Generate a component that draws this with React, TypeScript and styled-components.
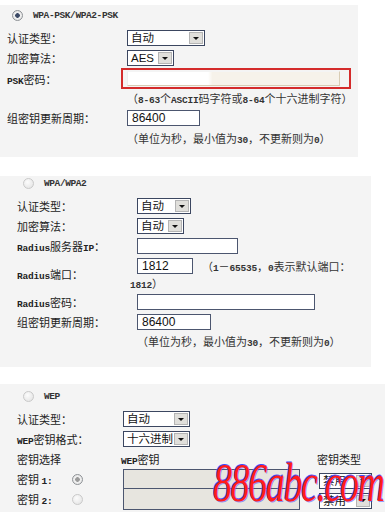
import styled, { createGlobalStyle } from 'styled-components';

const GlobalStyle = createGlobalStyle`
  html, body {
    margin: 0;
    padding: 0;
    background: #fff;
  }
  body {
    width: 385px;
    height: 512px;
    overflow: hidden;
    font-family: "Noto Sans CJK SC", sans-serif;
    color: #222;
  }
`;

const CJK = `"Noto Sans CJK SC", sans-serif`;

function L({ children }: { children: string }) {
  return <Latin>{children}</Latin>;
}

function Select({ width, value }: { width: number; value: string }) {
  return (
    <SelectBox $w={width}>
      <SelectText>{value}</SelectText>
      <SelectArrow />
    </SelectBox>
  );
}

export default function App() {
  return (
    <Page>
      <GlobalStyle />

      <Panel $width={358} $pad="3px 0 9px 7px">
        <ModeRow $indent={5}>
          <Radio $checked />
          <ModeLabel>WPA-PSK/WPA2-PSK</ModeLabel>
        </ModeRow>
        <FormRow $label={120}>
          <Label>认证类型：</Label>
          <Select width={78} value="自动" />
        </FormRow>
        <FormRow $label={120}>
          <Label>加密算法：</Label>
          <Select width={47} value="AES" />
        </FormRow>
        <FormRow $label={120}>
          <Label>
            <L>PSK</L>密码：
          </Label>
          <Highlight>
            <SecretField readOnly value="" />
          </Highlight>
        </FormRow>
        <FormRow $label={120}>
          <span />
          <Hint>
            （<L>8-63</L>个<L>ASCII</L>码字符或<L>8-64</L>个十六进制字符）
          </Hint>
        </FormRow>
        <FormRow $label={120}>
          <Label>组密钥更新周期：</Label>
          <Field $w={73} readOnly value="86400" />
        </FormRow>
        <FormRow $label={120}>
          <span />
          <Hint>
            （单位为秒，最小值为<L>30</L>，不更新则为<L>0</L>）
          </Hint>
        </FormRow>
      </Panel>

      <Panel $width={371} $pad="0 0 17px 17px" $top={19}>
        <ModeRow $indent={6}>
          <Radio />
          <ModeLabel>WPA/WPA2</ModeLabel>
        </ModeRow>
        <FormRow $label={120}>
          <Label>认证类型：</Label>
          <Select width={54} value="自动" />
        </FormRow>
        <FormRow $label={120}>
          <Label>加密算法：</Label>
          <Select width={47} value="自动" />
        </FormRow>
        <FormRow $label={120}>
          <Label>
            <L>Radius</L>服务器<L>IP</L>：
          </Label>
          <Field $w={101} readOnly value="" />
        </FormRow>
        <FormRow $label={120} $h={36}>
          <Label>
            <L>Radius</L>端口：
          </Label>
          <Stack>
            <Inline>
              <Field $w={56} readOnly value="1812" />
              <Hint>
                （<L>1</L>－<L>65535</L>，<L>0</L>表示默认端口：
              </Hint>
            </Inline>
            <Wrapped>
              <L>1812</L>）
            </Wrapped>
          </Stack>
        </FormRow>
        <FormRow $label={120}>
          <Label>
            <L>Radius</L>密码：
          </Label>
          <Field $w={178} readOnly value="" />
        </FormRow>
        <FormRow $label={120} $h={19}>
          <Label>组密钥更新周期：</Label>
          <Field $w={74} readOnly value="86400" />
        </FormRow>
        <FormRow $label={120} $h={19}>
          <span />
          <Hint>
            （单位为秒，最小值为<L>30</L>，不更新则为<L>0</L>）
          </Hint>
        </FormRow>
      </Panel>

      <Panel $width={385} $pad="5px 0 1px 17px" $top={17} $grow>
        <ModeRow $indent={6}>
          <Radio />
          <ModeLabel>WEP</ModeLabel>
        </ModeRow>
        <FormRow $label={106}>
          <Label>认证类型：</Label>
          <Select width={67} value="自动" />
        </FormRow>
        <FormRow $label={106}>
          <Label>
            <L>WEP</L>密钥格式：
          </Label>
          <Select width={67} value="十六进制" />
        </FormRow>
        <KeyTable>
          <KeyHead>密钥选择</KeyHead>
          <KeyHead $shift={-2}>
            <L>WEP</L>密钥
          </KeyHead>
          <span />
          <KeyHead $shift={-2}>密钥类型</KeyHead>

          {[1, 2].map((n) => (
            <KeyRow key={n} $h={n === 1 ? 21 : 22}>
              <KeyLabel>
                <span>
                  密钥 <L>{`${n}:`}</L>
                </span>
                <Radio $checked={n === 1} $soft />
              </KeyLabel>
              <Field $w={177} $disabled readOnly value="" />
              <span />
              <KeySelect>
                <Select width={53} value="禁用" />
              </KeySelect>
            </KeyRow>
          ))}
        </KeyTable>
      </Panel>

      <Watermark>886abc.com</Watermark>
    </Page>
  );
}

const Page = styled.div`
  position: relative;
  display: flex;
  flex-direction: column;
  padding-top: 5px;
  height: 512px;
  box-sizing: border-box;
`;

const Panel = styled.section<{ $width: number; $pad: string; $top?: number; $grow?: boolean }>`
  display: flex;
  flex-direction: column;
  width: ${(p) => p.$width}px;
  margin-top: ${(p) => p.$top ?? 0}px;
  padding: ${(p) => p.$pad};
  box-sizing: border-box;
  background: #f4f4f4;
  flex: ${(p) => (p.$grow ? 1 : 'none')};
`;

const ModeRow = styled.div<{ $indent: number }>`
  display: flex;
  align-items: center;
  gap: 10px;
  height: 14px;
  margin-bottom: 6px;
  padding-left: ${(p) => p.$indent}px;
`;

const Radio = styled.span<{ $checked?: boolean; $soft?: boolean }>`
  display: inline-block;
  width: 11px;
  height: 11px;
  flex: none;
  box-sizing: border-box;
  border-radius: 50%;
  border: 1px solid ${(p) => (p.$checked ? '#8e9296' : '#c9c9c9')};
  background: ${(p) =>
    p.$checked
      ? `radial-gradient(circle, ${p.$soft ? '#9a9a9a' : '#3c4a66'} 0 2px, #f2f2f2 2.6px, #dcdcdc 100%)`
      : 'radial-gradient(circle at 40% 35%, #fcfcfc 0, #e6e6e6 80%)'};
`;

const ModeLabel = styled.span`
  font-family: "Liberation Mono", monospace;
  font-size: 9.5px;
  font-weight: bold;
  color: #333;
  letter-spacing: -0.4px;
`;

const Latin = styled.span`
  font-family: "Liberation Mono", monospace;
  font-size: 9.5px;
  font-weight: bold;
  letter-spacing: -0.2px;
`;

const FormRow = styled.div<{ $label: number; $h?: number }>`
  display: grid;
  grid-template-columns: ${(p) => p.$label}px auto;
  align-items: center;
  justify-items: start;
  height: ${(p) => p.$h ?? 20}px;
`;

const Label = styled.span`
  font-family: ${CJK};
  font-size: 11px;
  color: #222;
  white-space: nowrap;
`;

const Hint = styled.span`
  font-family: ${CJK};
  font-size: 11px;
  color: #333;
  white-space: nowrap;
`;

const SelectBox = styled.div<{ $w: number }>`
  display: flex;
  align-items: stretch;
  width: ${(p) => p.$w}px;
  height: 16px;
  box-sizing: border-box;
  border: 1px solid #3b4660;
  background: #fff;
`;

const SelectText = styled.span`
  flex: 1;
  padding-left: 3px;
  font-family: "Liberation Sans", ${CJK};
  font-size: 11.5px;
  line-height: 14px;
  color: #111;
  white-space: nowrap;
  overflow: hidden;
`;

const SelectArrow = styled.span`
  display: flex;
  align-items: center;
  justify-content: center;
  width: 14px;
  margin: 1px;
  box-sizing: border-box;
  border: 1px solid #b4b4b4;
  background: #e0dfdb;

  &::after {
    content: '';
    border-left: 3px solid transparent;
    border-right: 3px solid transparent;
    border-top: 3px solid #111;
  }
`;

const Field = styled.input<{ $w: number; $disabled?: boolean }>`
  width: ${(p) => p.$w}px;
  height: 16px;
  margin: 0;
  padding: 0 0 0 4px;
  box-sizing: border-box;
  border: 1px solid #4c566f;
  border-radius: 0;
  outline: none;
  background: ${(p) => (p.$disabled ? '#e7e5df' : '#fff')};
  font-family: "Liberation Sans", sans-serif;
  font-size: 12px;
  color: #111;
`;

const Highlight = styled.div`
  display: flex;
  align-items: center;
  width: 230px;
  height: 21px;
  margin-left: -6px;
  padding-left: 4px;
  box-sizing: border-box;
  border: 2px solid #d42b2b;
`;

const SecretField = styled.input`
  width: 213px;
  height: 15px;
  margin: 0;
  padding: 0;
  box-sizing: border-box;
  border: 1px solid #d8ccb4;
  border-left-color: #eee;
  border-top-color: #f4f4f4;
  outline: none;
  background: linear-gradient(90deg, #fff 0 38%, #f6f2ea 40% 100%);
`;

const Stack = styled.div`
  display: flex;
  flex-direction: column;
`;

const Inline = styled.div`
  display: flex;
  align-items: center;
  gap: 9px;
  height: 17px;
`;

const Wrapped = styled.span`
  margin-left: -7px;
  height: 16px;
  line-height: 16px;
  font-family: ${CJK};
  font-size: 11px;
  color: #333;
`;

const KeyTable = styled.div`
  display: grid;
  grid-template-columns: 106px 177px 19px 53px;
  grid-auto-rows: 20px;
  align-items: center;
`;

const KeyHead = styled.span<{ $shift?: number }>`
  margin-left: ${(p) => p.$shift ?? 0}px;
  font-family: ${CJK};
  font-size: 11px;
  color: #222;
  white-space: nowrap;
`;

const KeyRow = styled.div<{ $h: number }>`
  display: contents;

  & > * {
    height: ${(p) => p.$h}px;
  }
`;

const KeyLabel = styled.div`
  display: flex;
  align-items: center;
  gap: 20px;
  font-family: ${CJK};
  font-size: 11px;
  color: #222;
`;

const KeySelect = styled.div`
  display: flex;
  align-items: center;
  padding-top: 3px;
  box-sizing: border-box;
`;

const Watermark = styled.div`
  position: absolute;
  left: 213px;
  top: 451px;
  font-family: "Liberation Serif", serif;
  font-style: italic;
  font-size: 55px;
  letter-spacing: -2px;
  color: #ff1c1c;
  text-shadow: -1px -1px 0 #3f4bff, 1px 1px 0 rgba(60, 70, 255, 0.5);
  transform: scaleX(0.69);
  transform-origin: left top;
  white-space: nowrap;
  pointer-events: none;
`;
